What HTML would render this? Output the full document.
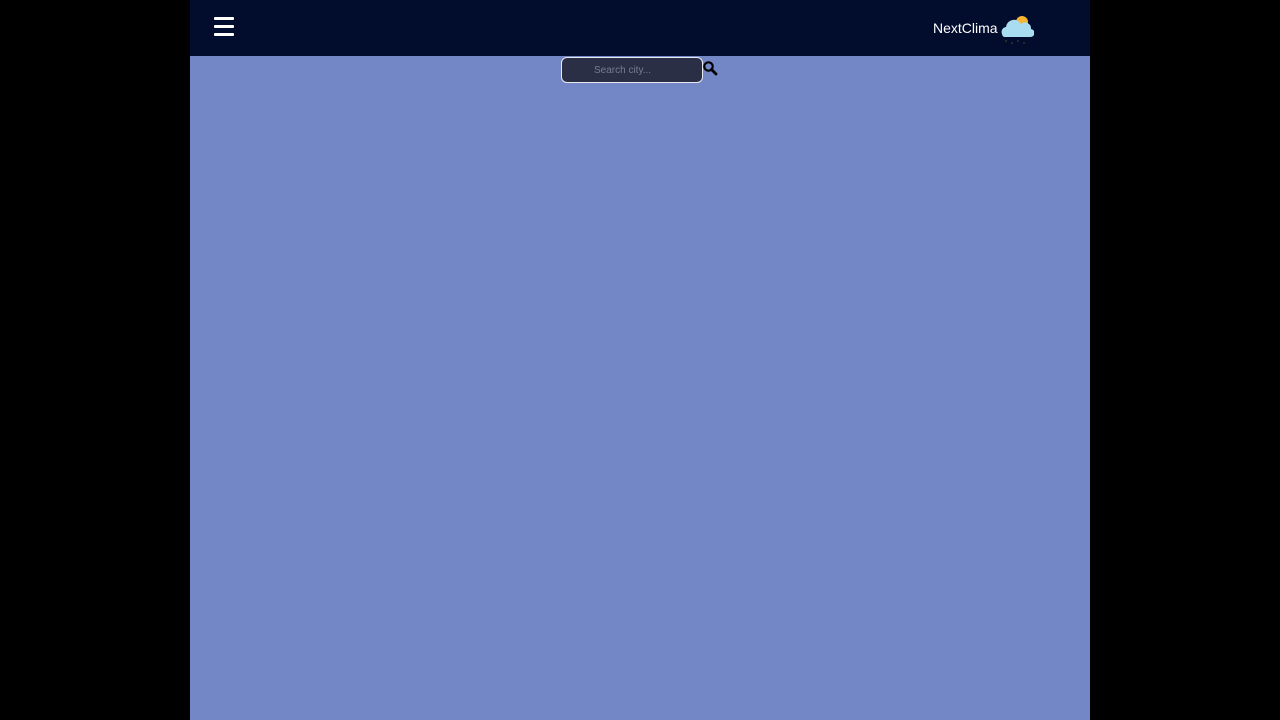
<!DOCTYPE html>
<html><head><style>
*{margin:0;padding:0;box-sizing:border-box}
body{width:1280px;height:720px;background:#000;overflow:hidden;font-family:"Liberation Sans",sans-serif}
.main{position:absolute;left:190px;top:0;width:900px;height:720px;background:#7387c6}
.hdr{position:absolute;left:0;top:0;width:900px;height:56px;background:#020c2c}
.burger{position:absolute;left:24px;top:17px;width:20px}
.burger div{height:3px;background:#fff;margin-bottom:5px;border-radius:1px}
.logo{position:absolute;left:743px;top:20px;color:#fff;font-size:14px}
.search{position:absolute;left:371px;top:57px;width:142px;height:26px;border:1px solid #e8e8f0;border-radius:6px;background:#2a2f45;color:#777d90;font-size:10px;padding-left:32px;line-height:26px}
</style></head><body>
<div class="main">
<div class="hdr">
<div class="burger"><div></div><div></div><div></div></div>
<div class="logo">NextClima</div>
<svg style="position:absolute;left:808px;top:12px" width="36" height="34" viewBox="0 0 36 34">
<circle cx="24" cy="10" r="6" fill="#f5b532"/>
<path d="M4 22a5 5 0 0 1 4-7a8 8 0 0 1 15-3a6 6 0 0 1 10 5a4 4 0 0 1-1 8H6a4 4 0 0 1-2-3z" fill="#a9dcf0"/>
<g fill="#333"><circle cx="8" cy="29" r="1"/><circle cx="14" cy="31" r="1"/><circle cx="20" cy="29" r="1"/><circle cx="26" cy="31" r="1"/></g>
</svg>
</div>
<div class="search">Search city...</div>
<svg style="position:absolute;left:512px;top:60px" width="16" height="16" viewBox="0 0 16 16"><circle cx="6.5" cy="6.5" r="4.2" fill="none" stroke="#000" stroke-width="2.2"/><path d="M9.5 9.5L14 14" stroke="#000" stroke-width="2.8" stroke-linecap="round"/></svg>
</div>
</body></html>
